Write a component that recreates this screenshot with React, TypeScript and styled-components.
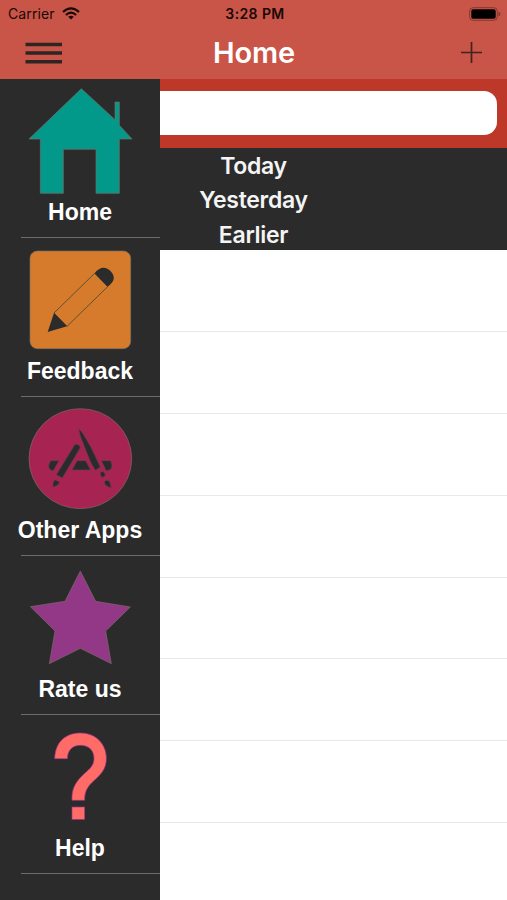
import React from "react";
import styled, { createGlobalStyle } from "styled-components";

const GlobalStyle = createGlobalStyle`
  * { box-sizing: border-box; }
  body { margin: 0; background: #fff; font-family: Inter, "Liberation Sans", sans-serif; }
`;

const Screen = styled.div`
  width: 507px;
  height: 900px;
  display: flex;
  flex-direction: column;
  overflow: hidden;
  background: #fff;
`;

const Header = styled.header`
  height: 79px;
  flex: none;
  background: #c85548;
`;

const StatusBar = styled.div`
  height: 27px;
  padding: 0 6px 0 8px;
  display: grid;
  grid-template-columns: 1fr auto 1fr;
  align-items: center;
  color: #180806;
`;

const Carrier = styled.div`
  display: flex;
  align-items: center;
  gap: 7px;
  font-size: 14px;
  letter-spacing: 0.1px;
`;

const Clock = styled.div`
  padding-left: 1px;
  font-size: 14px;
  font-weight: 600;
  letter-spacing: 0.4px;
`;

const Power = styled.div`
  display: flex;
  justify-content: flex-end;
`;

const NavBar = styled.div`
  height: 51px;
  padding: 0 24px 0 25px;
  display: grid;
  grid-template-columns: 1fr auto 1fr;
  align-items: center;
`;

const IconButton = styled.button<{ $end?: boolean }>`
  padding: 0;
  border: 0;
  background: none;
  display: flex;
  justify-self: ${(p) => (p.$end ? "end" : "start")};
`;

const Title = styled.h1`
  margin: 0;
  color: #fff;
  font-size: 29px;
  line-height: 50px;
  font-weight: 600;
  letter-spacing: -0.1px;
`;

const Body = styled.div`
  position: relative;
  flex: 1;
`;

const SearchStrip = styled.div`
  height: 69px;
  padding: 12px 10px;
  background: #be3829;
`;

const SearchField = styled.div`
  height: 44px;
  border-radius: 13px;
  background: #fff;
`;

const Sections = styled.div`
  height: 102px;
  padding-top: 1px;
  background: #2b2b2b;
`;

const SectionTitle = styled.div`
  height: 34.3px;
  line-height: 34.3px;
  color: #f4f4f4;
  font-size: 23px;
  font-weight: 600;
  letter-spacing: -0.3px;
  text-align: center;
`;

const EmptyRow = styled.div`
  height: 81.9px;
  border-bottom: 1px solid #e8e8e8;
`;

const Drawer = styled.nav`
  position: absolute;
  top: 0;
  bottom: 0;
  left: 0;
  width: 160px;
  background: #2b2b2b;
`;

const DrawerItem = styled.div`
  height: 159px;
  display: flex;
  flex-direction: column;
`;

const DrawerIcon = styled.svg`
  display: block;
  flex: none;
  width: 160px;
  height: 117px;
`;

const DrawerLabel = styled.div`
  flex: 1;
  padding-top: 2px;
  color: #fff;
  font: bold 23px/28px "Liberation Sans", Arial, sans-serif;
  text-align: center;
`;

const Divider = styled.div`
  height: 1px;
  margin-left: 21px;
  background: #6b6b6b;
`;

const edge = { stroke: "#777067", strokeWidth: 2 };

const items = [
  {
    label: "Home",
    top: 3,
    art: (
      <path
        d="M244 32 345 125V72H358V142L396 183H358V346H288V214H190V346H121V183H87Z"
        fill="#03998a"
        {...edge}
      />
    ),
  },
  {
    label: "Feedback",
    top: -6,
    art: (
      <>
        <rect x="90" y="33" width="302" height="293" rx="22" fill="#d67b2b" {...edge} />
        <path d="M162 219 284 100 323 140 201 259Z" fill="none" stroke="#5d5038" strokeWidth="3" />
        <path d="M143 276 162 219 201 259Z" fill="#2b2b2b" />
        <path d="M284 100C298 80 318 78 332 94C347 110 344 125 323 140Z" fill="#2b2b2b" />
      </>
    ),
  },
  {
    label: "Other Apps",
    top: -3,
    art: (
      <>
        <ellipse cx="241" cy="182" rx="154" ry="150" fill="#a72352" {...edge} />
        <g fill="#2b2b2b" stroke="#6b3c4c" strokeWidth="2" strokeLinejoin="round">
          <path d="M236 93Q244 97 252 112L273 148 301 207 287 217Q277 207 263 171L240 112Z" />
          <path d="M301 222 311 221 317 232 306 239Q300 232 301 222Z" />
          <path d="M314 249Q326 242 330 254L334 269Q318 266 314 257Z" />
          <path d="M224 140Q236 136 241 149L187 240 169 230Z" />
          <path d="M164 245 179 252Q175 264 158 267Q158 253 164 245Z" />
          <path d="M152 188H177L160 218Q144 217 146 201Z" />
          <path d="M231 188H257L272 216H216Z" />
          <path d="M304 188H332Q339 202 333 214L319 219Z" />
        </g>
      </>
    ),
  },
  {
    label: "Rate us",
    top: 0,
    art: (
      <path
        d="M241 45 287 136 391 153 317 225 334 323 241 277 148 323 165 225 91 152 195 136Z"
        fill="#933787"
        {...edge}
      />
    ),
  },
  {
    label: "Help",
    top: 0,
    art: (
      <g fill="#ff6b66" stroke="#9e388c" strokeWidth="2">
        <path d="M164 131C166 83 194 54 242 54C288 54 319 88 319 130C319 160 305 176 283 196C262 214 253 231 254 256H216C214 219 229 198 252 177C270 161 282 151 282 130C282 107 267 91 241 91C215 91 203 108 202 131Z" />
        <rect x="216" y="276" width="38" height="37" />
      </g>
    ),
  },
];

export default function App() {
  return (
    <>
      <GlobalStyle />
      <Screen>
        <Header>
          <StatusBar>
            <Carrier>
              Carrier
              <svg width="18" height="13" viewBox="0 0 18 13">
                <g fill="none" stroke="currentColor" strokeWidth="2.2">
                  <path d="M1 5Q9-2.2 17 5" />
                  <path d="M3.9 8Q9 3.3 14.1 8" />
                </g>
                <path d="M6.2 9.8Q9 7.6 11.8 9.8L9 12.6Z" fill="currentColor" />
              </svg>
            </Carrier>
            <Clock>3:28 PM</Clock>
            <Power>
              <svg width="32" height="14" viewBox="0 0 32 14">
                <rect x=".7" y=".7" width="27.6" height="12.6" rx="3.5" fill="none" stroke="#83372f" />
                <rect x="2.3" y="2.3" width="24.4" height="9.4" rx="1.8" fill="#000" />
                <path d="M29.5 4.8Q31.5 5.2 31.5 7T29.5 9.2Z" fill="#83372f" />
              </svg>
            </Power>
          </StatusBar>
          <NavBar>
            <IconButton aria-label="Menu">
              <svg width="38" height="22" viewBox="0 0 38 22">
                <path d="M.5 2.5H37M.5 11H37M.5 19.7H37" stroke="#2d2424" strokeWidth="3.5" />
              </svg>
            </IconButton>
            <Title>Home</Title>
            <IconButton $end aria-label="Add">
              <svg width="23" height="22" viewBox="0 0 23 22">
                <path d="M1 10.5H22M11.5 0V21" stroke="#40231f" strokeWidth="1.7" />
              </svg>
            </IconButton>
          </NavBar>
        </Header>
        <Body>
          <SearchStrip>
            <SearchField />
          </SearchStrip>
          <Sections>
            {["Today", "Yesterday", "Earlier"].map((name) => (
              <SectionTitle key={name}>{name}</SectionTitle>
            ))}
          </Sections>
          {Array.from({ length: 7 }, (_, i) => (
            <EmptyRow key={i} />
          ))}
          <Drawer>
            {items.map((item) => (
              <DrawerItem key={item.label}>
                <DrawerIcon viewBox={`0 ${item.top} 480 351`}>{item.art}</DrawerIcon>
                <DrawerLabel>{item.label}</DrawerLabel>
                <Divider />
              </DrawerItem>
            ))}
          </Drawer>
        </Body>
      </Screen>
    </>
  );
}
